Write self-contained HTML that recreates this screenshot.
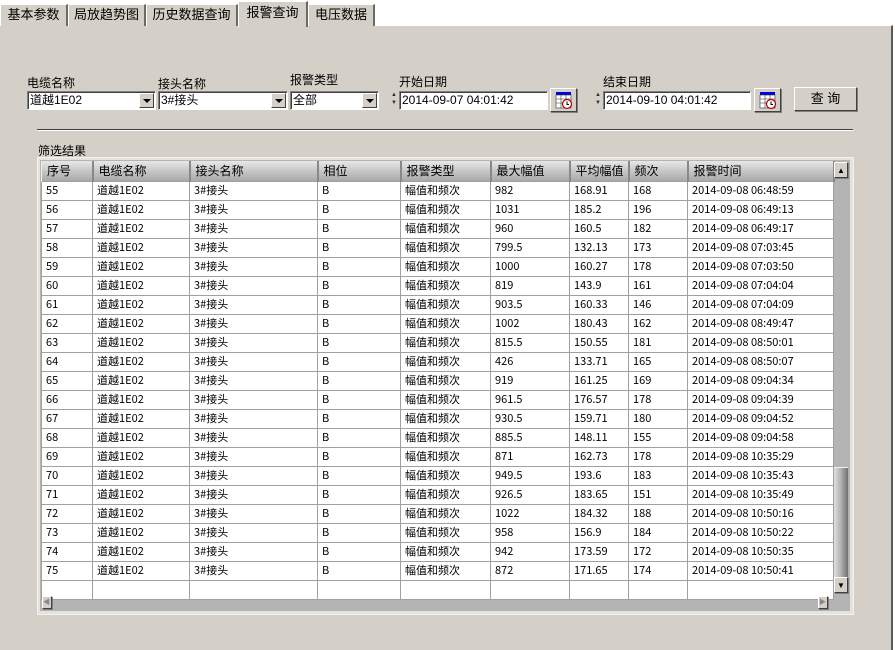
<!DOCTYPE html>
<html><head><meta charset="utf-8"><style>
*{margin:0;padding:0;box-sizing:border-box}
body{width:895px;height:650px;background:#fff;position:relative;overflow:hidden;font-family:"Liberation Sans","Noto Sans CJK SC","WenQuanYi Zen Hei",sans-serif;font-size:12px;color:#000}
.a{position:absolute}
.panel{left:0;top:25px;width:893px;height:625px;background:#d4d0c8;border-top:1px solid #fff;border-right:2px solid #5a5a5a}
.tab{top:4px;height:22px;background:#d4d0c8;border:1px solid #fff;border-right:2px solid #6a6a6a;border-bottom:none;text-align:center;line-height:20px;font-size:13px}
.tab.sel{top:1px;height:26px;line-height:22px;border-bottom:none;z-index:2}
.lbl{font-size:12px}
.combo{height:19px;background:#fff;border:1px solid #808080;border-right-color:#fff;border-bottom-color:#fff;box-shadow:inset 1px 1px #404040;padding-left:2px;line-height:17px;font-size:12px}
.dd{position:absolute;right:1px;top:1px;width:15px;height:15px;background:#d4d0c8;border:1px solid #fff;border-right-color:#404040;border-bottom-color:#404040}
.dd:after{content:"";position:absolute;left:3px;top:5px;border-left:4px solid transparent;border-right:4px solid transparent;border-top:4px solid #000}
.btn{background:#d4d0c8;border:1px solid #fff;border-right-color:#404040;border-bottom-color:#404040;box-shadow:1px 1px #808080}
table{border-collapse:collapse;table-layout:fixed;position:absolute;left:41px;top:161px}
td{height:19px;border:1px solid #a0a0a0;background:#fff;padding-left:4px;font-size:11px;line-height:17px;vertical-align:middle;white-space:nowrap;overflow:hidden;font-family:"WenQuanYi Zen Hei","Noto Sans CJK SC",sans-serif}
th{height:20px;background:linear-gradient(#e8e8e8,#c0c0c0 60%,#a8a8a8);border-right:2px solid #888;border-left:1px solid #f0f0f0;text-align:left;font-weight:normal;padding-left:5px;font-size:12px}
</style></head><body>
<div class="a panel"></div>
<div class="a tab" style="left:0;width:68px">基本参数</div>
<div class="a tab" style="left:68px;width:78px">局放趋势图</div>
<div class="a tab" style="left:146px;width:92px">历史数据查询</div>
<div class="a tab sel" style="left:238px;width:70px">报警查询</div>
<div class="a tab" style="left:308px;width:67px">电压数据</div>

<div class="a lbl" style="left:27px;top:74px">电缆名称</div>
<div class="a lbl" style="left:158px;top:75px">接头名称</div>
<div class="a lbl" style="left:290px;top:71px">报警类型</div>
<div class="a lbl" style="left:399px;top:73px">开始日期</div>
<div class="a lbl" style="left:603px;top:73px">结束日期</div>
<div class="a combo" style="left:27px;top:91px;width:129px">道越1E02<div class="dd"></div></div>
<div class="a combo" style="left:158px;top:91px;width:130px">3#接头<div class="dd"></div></div>
<div class="a combo" style="left:290px;top:91px;width:89px">全部<div class="dd"></div></div>

<div class="a" style="left:391px;top:91px;width:7px;height:18px;font-size:6px;line-height:8px;color:#333">▲<br>▼</div>
<div class="a combo" style="left:399px;top:91px;width:149px">2014-09-07 04:01:42</div>
<div class="a btn" style="left:550px;top:88px;width:27px;height:24px">
<svg width="25" height="22" style="position:absolute;left:0;top:0"><rect x="5" y="3" width="15" height="3" fill="#0000e0"/><rect x="5" y="6" width="15" height="13" fill="#fff" stroke="#333" stroke-width="0.6"/><path d="M5 10h15M5 14h15M10 6v13M15 6v13" stroke="#333" stroke-width="0.6"/><circle cx="16" cy="15" r="4.5" fill="#fff" stroke="#a00" stroke-width="1.2"/><path d="M16 12.5v3h2" stroke="#000" fill="none"/></svg></div>
<div class="a" style="left:595px;top:91px;width:7px;height:18px;font-size:6px;line-height:8px;color:#333">▲<br>▼</div>
<div class="a combo" style="left:603px;top:91px;width:148px">2014-09-10 04:01:42</div>
<div class="a btn" style="left:754px;top:88px;width:27px;height:24px">
<svg width="25" height="22" style="position:absolute;left:0;top:0"><rect x="5" y="3" width="15" height="3" fill="#0000e0"/><rect x="5" y="6" width="15" height="13" fill="#fff" stroke="#333" stroke-width="0.6"/><path d="M5 10h15M5 14h15M10 6v13M15 6v13" stroke="#333" stroke-width="0.6"/><circle cx="16" cy="15" r="4.5" fill="#fff" stroke="#a00" stroke-width="1.2"/><path d="M16 12.5v3h2" stroke="#000" fill="none"/></svg></div>
<div class="a btn" style="left:794px;top:87px;width:63px;height:24px;text-align:center;line-height:22px;font-size:13px">查 询</div>

<div class="a" style="left:37px;top:129px;width:816px;height:2px;background:#404040;border-bottom:1px solid #fff"></div>
<div class="a lbl" style="left:38px;top:142px">筛选结果</div>

<div class="a" style="left:37px;top:157px;width:817px;height:458px;background:#e6e3dc;border:1px solid #f4f2ee"></div>
<div class="a" style="left:40px;top:160px;width:810px;height:451px;background:#b4b4b4"></div>
<table>
<colgroup><col style="width:51px"><col style="width:97px"><col style="width:128px"><col style="width:83px"><col style="width:90px"><col style="width:79px"><col style="width:59px"><col style="width:59px"><col style="width:146px"></colgroup>
<tr><th>序号</th><th>电缆名称</th><th>接头名称</th><th>相位</th><th>报警类型</th><th>最大幅值</th><th>平均幅值</th><th>频次</th><th>报警时间</th></tr>
<tr><td>55</td><td>道越1E02</td><td>3#接头</td><td>B</td><td>幅值和频次</td><td>982</td><td>168.91</td><td>168</td><td>2014-09-08 06:48:59</td></tr>
<tr><td>56</td><td>道越1E02</td><td>3#接头</td><td>B</td><td>幅值和频次</td><td>1031</td><td>185.2</td><td>196</td><td>2014-09-08 06:49:13</td></tr>
<tr><td>57</td><td>道越1E02</td><td>3#接头</td><td>B</td><td>幅值和频次</td><td>960</td><td>160.5</td><td>182</td><td>2014-09-08 06:49:17</td></tr>
<tr><td>58</td><td>道越1E02</td><td>3#接头</td><td>B</td><td>幅值和频次</td><td>799.5</td><td>132.13</td><td>173</td><td>2014-09-08 07:03:45</td></tr>
<tr><td>59</td><td>道越1E02</td><td>3#接头</td><td>B</td><td>幅值和频次</td><td>1000</td><td>160.27</td><td>178</td><td>2014-09-08 07:03:50</td></tr>
<tr><td>60</td><td>道越1E02</td><td>3#接头</td><td>B</td><td>幅值和频次</td><td>819</td><td>143.9</td><td>161</td><td>2014-09-08 07:04:04</td></tr>
<tr><td>61</td><td>道越1E02</td><td>3#接头</td><td>B</td><td>幅值和频次</td><td>903.5</td><td>160.33</td><td>146</td><td>2014-09-08 07:04:09</td></tr>
<tr><td>62</td><td>道越1E02</td><td>3#接头</td><td>B</td><td>幅值和频次</td><td>1002</td><td>180.43</td><td>162</td><td>2014-09-08 08:49:47</td></tr>
<tr><td>63</td><td>道越1E02</td><td>3#接头</td><td>B</td><td>幅值和频次</td><td>815.5</td><td>150.55</td><td>181</td><td>2014-09-08 08:50:01</td></tr>
<tr><td>64</td><td>道越1E02</td><td>3#接头</td><td>B</td><td>幅值和频次</td><td>426</td><td>133.71</td><td>165</td><td>2014-09-08 08:50:07</td></tr>
<tr><td>65</td><td>道越1E02</td><td>3#接头</td><td>B</td><td>幅值和频次</td><td>919</td><td>161.25</td><td>169</td><td>2014-09-08 09:04:34</td></tr>
<tr><td>66</td><td>道越1E02</td><td>3#接头</td><td>B</td><td>幅值和频次</td><td>961.5</td><td>176.57</td><td>178</td><td>2014-09-08 09:04:39</td></tr>
<tr><td>67</td><td>道越1E02</td><td>3#接头</td><td>B</td><td>幅值和频次</td><td>930.5</td><td>159.71</td><td>180</td><td>2014-09-08 09:04:52</td></tr>
<tr><td>68</td><td>道越1E02</td><td>3#接头</td><td>B</td><td>幅值和频次</td><td>885.5</td><td>148.11</td><td>155</td><td>2014-09-08 09:04:58</td></tr>
<tr><td>69</td><td>道越1E02</td><td>3#接头</td><td>B</td><td>幅值和频次</td><td>871</td><td>162.73</td><td>178</td><td>2014-09-08 10:35:29</td></tr>
<tr><td>70</td><td>道越1E02</td><td>3#接头</td><td>B</td><td>幅值和频次</td><td>949.5</td><td>193.6</td><td>183</td><td>2014-09-08 10:35:43</td></tr>
<tr><td>71</td><td>道越1E02</td><td>3#接头</td><td>B</td><td>幅值和频次</td><td>926.5</td><td>183.65</td><td>151</td><td>2014-09-08 10:35:49</td></tr>
<tr><td>72</td><td>道越1E02</td><td>3#接头</td><td>B</td><td>幅值和频次</td><td>1022</td><td>184.32</td><td>188</td><td>2014-09-08 10:50:16</td></tr>
<tr><td>73</td><td>道越1E02</td><td>3#接头</td><td>B</td><td>幅值和频次</td><td>958</td><td>156.9</td><td>184</td><td>2014-09-08 10:50:22</td></tr>
<tr><td>74</td><td>道越1E02</td><td>3#接头</td><td>B</td><td>幅值和频次</td><td>942</td><td>173.59</td><td>172</td><td>2014-09-08 10:50:35</td></tr>
<tr><td>75</td><td>道越1E02</td><td>3#接头</td><td>B</td><td>幅值和频次</td><td>872</td><td>171.65</td><td>174</td><td>2014-09-08 10:50:41</td></tr>
<tr><td style="height:17px"></td><td></td><td></td><td></td><td></td><td></td><td></td><td></td><td></td></tr>
</table>
<div class="a btn" style="left:834px;top:162px;width:14px;height:16px;font-size:8px;text-align:center;line-height:15px">▲</div>
<div class="a" style="left:834px;top:467px;width:14px;height:110px;background:linear-gradient(90deg,#e0e0e0,#b0b0b0 50%,#707070);border-top:1px solid #eee"></div>
<div class="a btn" style="left:834px;top:577px;width:14px;height:16px;font-size:8px;text-align:center;line-height:15px">▼</div>
<div class="a btn" style="left:42px;top:596px;width:10px;height:13px;font-size:7px;line-height:12px;color:#888">◀</div>
<div class="a btn" style="left:818px;top:596px;width:10px;height:13px;font-size:7px;line-height:12px;color:#888">▶</div>
</body></html>
